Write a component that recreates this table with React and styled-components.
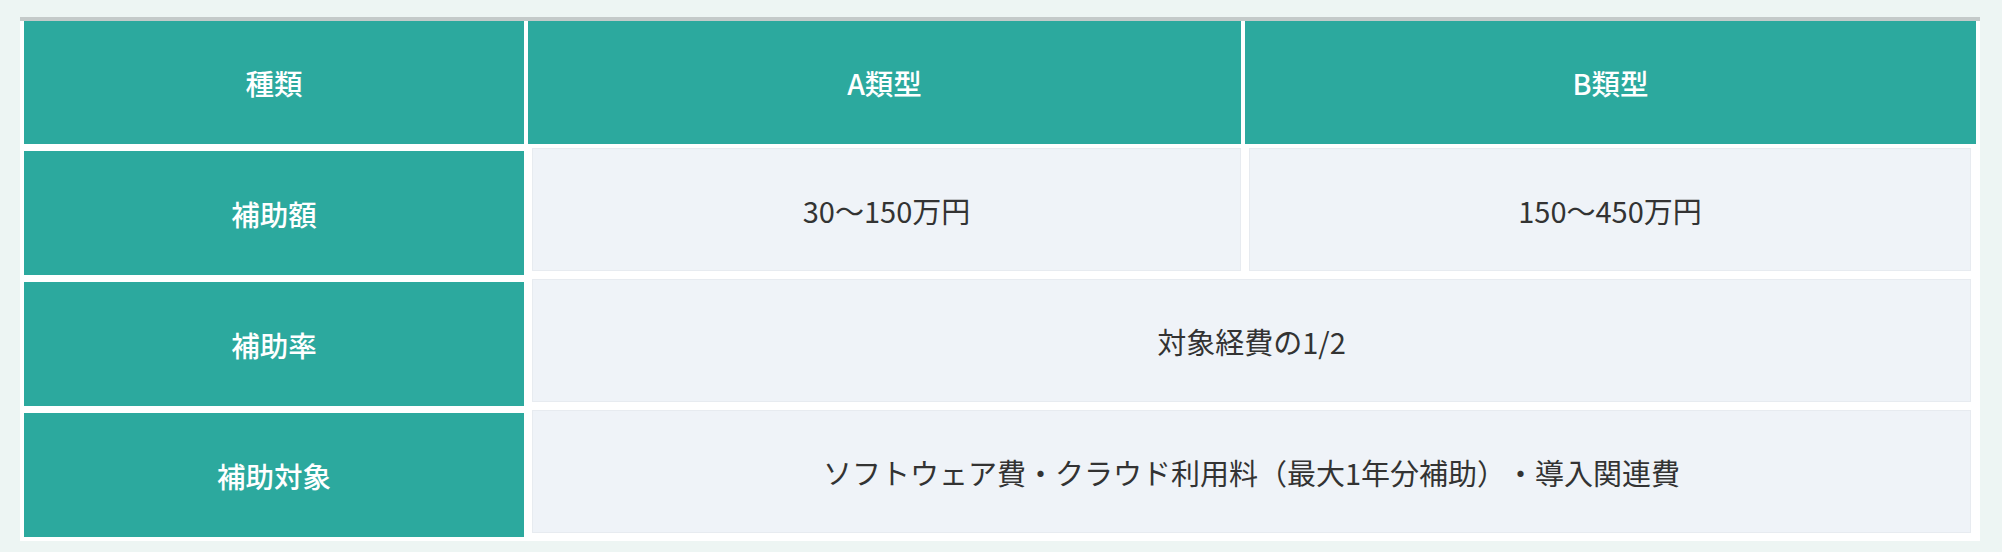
import React from 'react';
import styled, { createGlobalStyle } from 'styled-components';

const GlobalStyle = createGlobalStyle`
  html, body {
    margin: 0;
    padding: 0;
    background: #edf5f3;
  }
  body {
    font-family: "Noto Sans CJK JP", "Noto Sans", sans-serif;
    text-spacing-trim: space-all;
  }
`

const Page = styled.div`
  padding: 17px 0 0 20px;
`

const Table = styled.div`
  display: grid;
  grid-template-columns: 500px 713px 1fr;
  grid-template-rows: 123px repeat(3, 124px);
  column-gap: 4px;
  row-gap: 7px;
  width: 1960px;
  box-sizing: border-box;
  padding: 4px;
  background: #fff;
  box-shadow: inset 0 4px 0 #c4cac9;
`

const TealCell = styled.div`
  display: flex;
  align-items: center;
  justify-content: center;
  background: #2ca99e;
  color: #fff;
  font-size: 28.5px;
  font-weight: 500;
`

const ValueCell = styled.div`
  display: flex;
  align-items: center;
  justify-content: center;
  grid-column: ${p => (p.$span ? '2 / 4' : 'auto')};
  margin: -3px ${p => (p.$last ? 5 : 0)}px 4px 4px;
  background: #eff3f8;
  border: 1px solid #e7ebf0;
  color: #333;
  font-size: 29px;
`

const App = () => {
    return (
        <Page>
            <GlobalStyle />
            <Table>
                <TealCell>種類</TealCell>
                <TealCell>A類型</TealCell>
                <TealCell>B類型</TealCell>

                <TealCell>補助額</TealCell>
                <ValueCell>30〜150万円</ValueCell>
                <ValueCell $last>150〜450万円</ValueCell>

                <TealCell>補助率</TealCell>
                <ValueCell $span $last>対象経費の1/2</ValueCell>

                <TealCell>補助対象</TealCell>
                <ValueCell $span $last>ソフトウェア費・クラウド利用料（最大1年分補助）・導入関連費</ValueCell>
            </Table>
        </Page>
    )
}

export default App
